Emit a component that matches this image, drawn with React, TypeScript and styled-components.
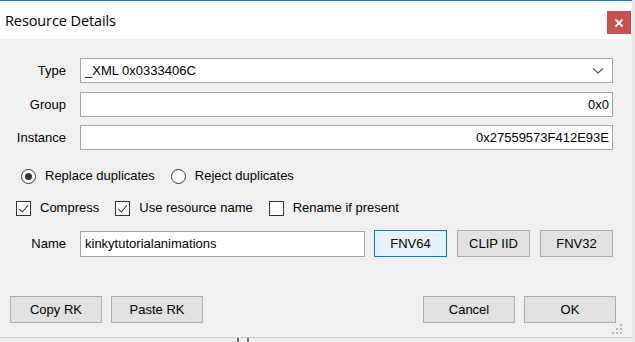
import styled, { createGlobalStyle } from "styled-components";

const GlobalStyle = createGlobalStyle`
  html, body {
    margin: 0;
    padding: 0;
    background: #e6e6e6;
    width: 635px;
    height: 342px;
    overflow: hidden;
  }
  * { box-sizing: border-box; }
`;

export default function App() {
  return (
    <>
      <GlobalStyle />
      <Page>
        <Window>
          <TitleBar>
            <Title>Resource Details</Title>
            <CloseButton>
              <svg width="10" height="10" viewBox="0 0 10 10">
                <path d="M1.5 1.5 L8.5 8.5 M8.5 1.5 L1.5 8.5" stroke="#fff" strokeWidth="1.8" />
              </svg>
            </CloseButton>
          </TitleBar>

          <Body>
            <FieldGrid>
              <Label>Type</Label>
              <ComboBox>
                <FieldText>_XML 0x0333406C</FieldText>
                <svg width="12" height="8" viewBox="0 0 12 8">
                  <path d="M1 1.5 L6 6 L11 1.5" fill="none" stroke="#555" strokeWidth="1.1" />
                </svg>
              </ComboBox>

              <Label>Group</Label>
              <TextBox $right>
                <FieldText>0x0</FieldText>
              </TextBox>

              <Label>Instance</Label>
              <TextBox $right>
                <FieldText>0x27559573F412E93E</FieldText>
              </TextBox>
            </FieldGrid>

            <OptionRow $top={16} $left={21}>
              <Option>
                <Radio $checked />
                <OptionText>Replace duplicates</OptionText>
              </Option>
              <Option>
                <Radio />
                <OptionText>Reject duplicates</OptionText>
              </Option>
            </OptionRow>

            <OptionRow $top={12} $left={16}>
              <Option>
                <CheckBox $checked />
                <OptionText>Compress</OptionText>
              </Option>
              <Option>
                <CheckBox $checked />
                <OptionText>Use resource name</OptionText>
              </Option>
              <Option>
                <CheckBox />
                <OptionText>Rename if present</OptionText>
              </Option>
            </OptionRow>

            <NameRow>
              <Label>Name</Label>
              <NameBox>
                <FieldText>kinkytutorialanimations</FieldText>
              </NameBox>
              <HashButtons>
                <Button $focused>FNV64</Button>
                <Button>CLIP IID</Button>
                <Button>FNV32</Button>
              </HashButtons>
            </NameRow>

            <Footer>
              <ButtonGroup>
                <Button $wide>Copy RK</Button>
                <Button $wide>Paste RK</Button>
              </ButtonGroup>
              <ButtonGroup>
                <Button $wide>Cancel</Button>
                <Button $wide>OK</Button>
              </ButtonGroup>
            </Footer>
            <Grip>
              <svg width="10" height="10" viewBox="0 0 10 10">
                {[
                  [8, 0],
                  [8, 4],
                  [4, 4],
                  [8, 8],
                  [4, 8],
                  [0, 8],
                ].map(([x, y]) => (
                  <rect key={`${x}-${y}`} x={x} y={y} width="2" height="2" fill="#b8b8b8" />
                ))}
              </svg>
            </Grip>
          </Body>
        </Window>
        <Backdrop>
          <Mark />
          <Mark $gap={8} />
        </Backdrop>
      </Page>
    </>
  );
}

const Page = styled.div`
  width: 635px;
  height: 342px;
  display: flex;
  flex-direction: column;
`;

const Window = styled.div`
  width: 632px;
  height: 338px;
  background: #f0f0f0;
  border-top: 1px solid #1883d7;
  border-bottom: 1px solid #cfcfcf;
  display: flex;
  flex-direction: column;
  font-family: "Liberation Sans", Arial, sans-serif;
  font-size: 13px;
  color: #000;
`;

const TitleBar = styled.div`
  height: 38px;
  background: #fff;
  display: flex;
  align-items: flex-start;
  justify-content: space-between;
  padding: 10px 1px 0 5px;
`;

const Title = styled.div`
  font-family: "Open Sans", "Noto Sans", sans-serif;
  font-size: 14.5px;
  line-height: 20px;
  color: #000;
  letter-spacing: -0.1px;
`;

const CloseButton = styled.div`
  width: 24px;
  height: 23px;
  background: #c75050;
  display: flex;
  align-items: center;
  justify-content: center;
`;

const Body = styled.div`
  flex: 1;
  position: relative;
  display: flex;
  flex-direction: column;
  padding: 19px 19px 0 0;
`;

const FieldGrid = styled.div`
  display: grid;
  grid-template-columns: 66px 1fr;
  column-gap: 14px;
  row-gap: 8px;
  align-items: center;
`;

const Label = styled.div`
  text-align: right;
  line-height: 16px;
  width: 66px;
  flex: none;
`;

const TextBox = styled.div<{ $right?: boolean }>`
  height: 25px;
  background: #fff;
  border: 1px solid #a3a3a3;
  display: flex;
  align-items: center;
  justify-content: ${(p) => (p.$right ? "flex-end" : "flex-start")};
  padding: 0 3px 0 4px;
`;

const ComboBox = styled(TextBox)`
  justify-content: space-between;
  padding: 0 8px 0 4px;
  margin-bottom: 1px;
`;

const FieldText = styled.span`
  line-height: 16px;
  white-space: nowrap;
`;

const OptionRow = styled.div<{ $top: number; $left: number }>`
  display: flex;
  align-items: center;
  height: 20px;
  margin-top: ${(p) => p.$top}px;
  padding-left: ${(p) => p.$left}px;
  gap: 16px;
`;

const Option = styled.div`
  display: flex;
  align-items: center;
  gap: 9px;
`;

const OptionText = styled.span`
  line-height: 16px;
  white-space: nowrap;
`;

const Radio = styled.span<{ $checked?: boolean }>`
  width: 15px;
  height: 15px;
  border-radius: 50%;
  border: 1px solid #333;
  background: #fff;
  display: flex;
  align-items: center;
  justify-content: center;
  &::after {
    content: "";
    width: 7px;
    height: 7px;
    border-radius: 50%;
    background: ${(p) => (p.$checked ? "#333" : "transparent")};
  }
`;

const CheckBox = styled.span<{ $checked?: boolean }>`
  width: 15px;
  height: 15px;
  border: 1px solid #333;
  background: #fff;
  position: relative;
  &::after {
    content: "";
    display: ${(p) => (p.$checked ? "block" : "none")};
    position: absolute;
    left: 4px;
    top: 1px;
    width: 4px;
    height: 8px;
    border-right: 1.3px solid #333;
    border-bottom: 1.3px solid #333;
    transform: rotate(40deg);
  }
`;

const NameRow = styled.div`
  display: flex;
  align-items: center;
  margin-top: 12px;
  gap: 14px;
`;

const NameBox = styled(TextBox)`
  width: 286px;
  height: 26px;
`;

const HashButtons = styled.div`
  display: flex;
  gap: 10px;
  margin-left: -5px;
`;

const Button = styled.div<{ $focused?: boolean; $wide?: boolean }>`
  width: ${(p) => (p.$wide ? "92px" : "73px")};
  height: 27px;
  background: ${(p) => (p.$focused ? "#e5f1fb" : "#e1e1e1")};
  border: 1px solid ${(p) => (p.$focused ? "#0078d7" : "#adadad")};
  display: flex;
  align-items: center;
  justify-content: center;
  line-height: 16px;
  white-space: nowrap;
`;

const Footer = styled.div`
  display: flex;
  justify-content: space-between;
  margin-top: 39px;
  padding-left: 10px;
  margin-right: -3px;
`;

const ButtonGroup = styled.div`
  display: flex;
  gap: 9px;
`;

const Grip = styled.div`
  position: absolute;
  right: 10px;
  bottom: 3px;
  width: 10px;
  height: 10px;
  display: flex;
`;

const Backdrop = styled.div`
  flex: 1;
  display: flex;
  background: #ececec;
  padding-left: 237px;
`;

const Mark = styled.div<{ $gap?: number }>`
  width: 2px;
  background: #6a6a6a;
  margin-left: ${(p) => p.$gap ?? 0}px;
`;
